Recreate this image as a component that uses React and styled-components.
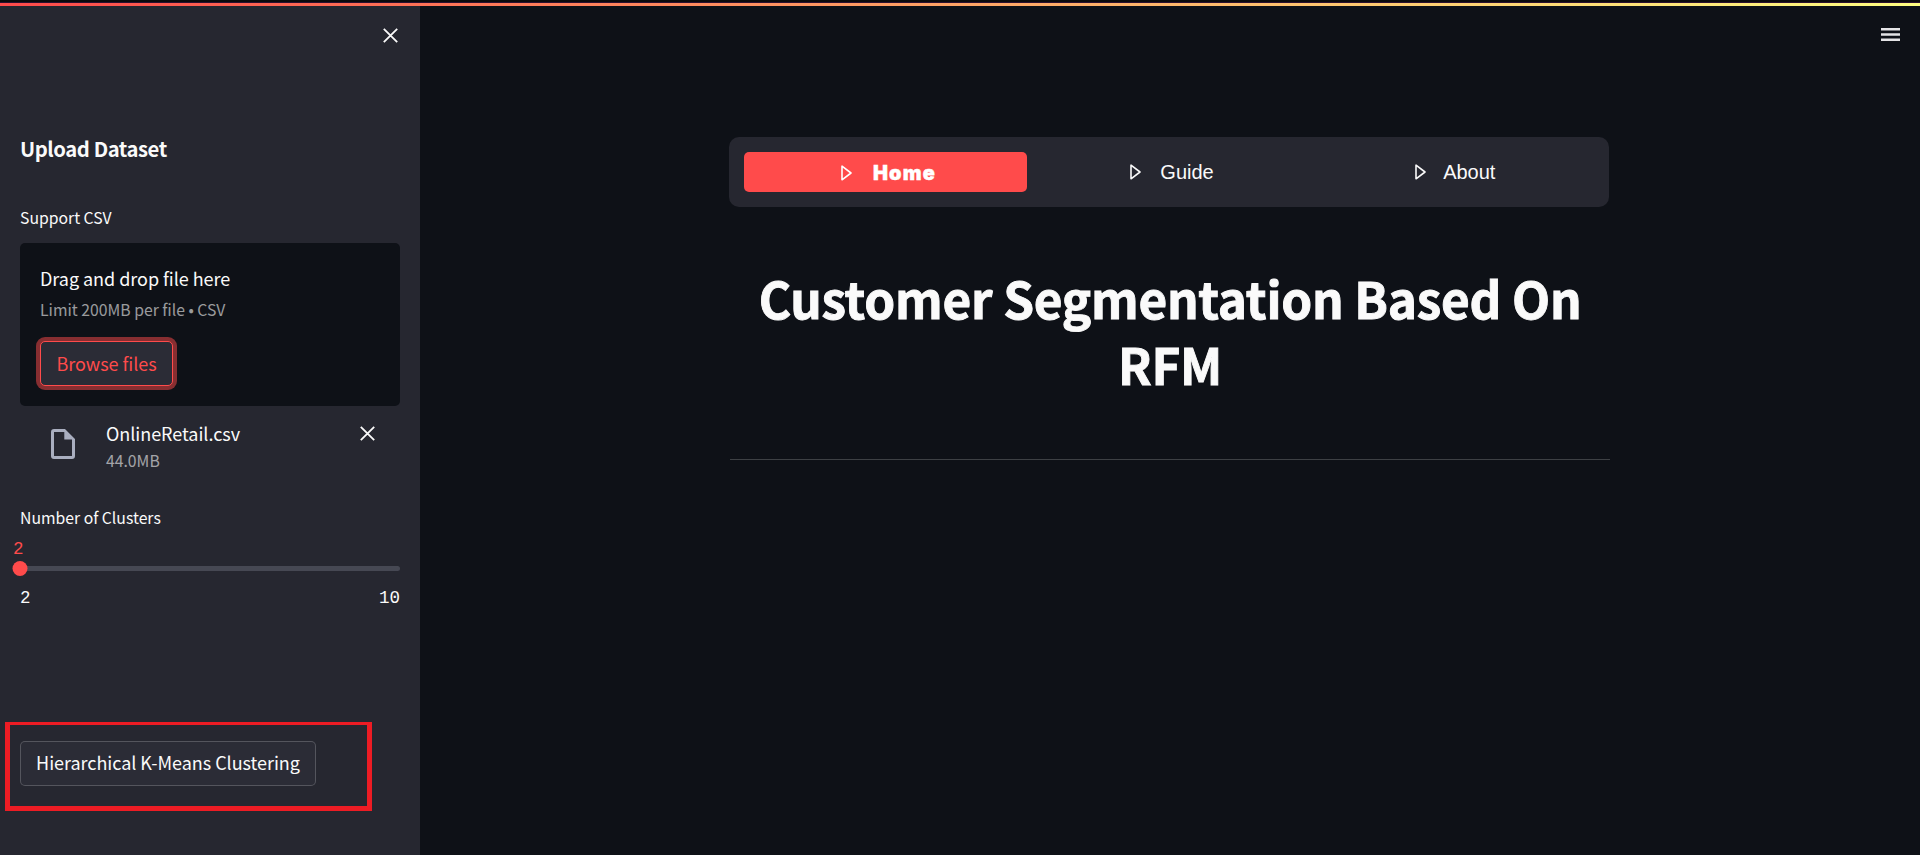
import React from "react";
import styled, { createGlobalStyle } from "styled-components";

const sans = `"Noto Sans CJK JP", "Noto Sans CJK SC", "Noto Sans", sans-serif`;
const mono = `"Liberation Mono", "DejaVu Sans Mono", monospace`;

const GlobalStyle = createGlobalStyle`
  * { box-sizing: border-box; }
  body {
    margin: 0;
    background: #0e1117;
    color: #fafafa;
    font-family: ${sans};
  }
  button { font: inherit; cursor: pointer; }
`;

const Page = styled.div`
  height: 855px;
  display: flex;
  flex-direction: column;
  overflow: hidden;
`;

const Decoration = styled.div`
  flex: none;
  height: 6px;
  border-top: 2px solid #0b0a0c;
  background: linear-gradient(90deg, #ff4b4b, #fffd80);
  box-shadow: inset 0 1px 0 #2a1030;
`;

const Columns = styled.div`
  flex: 1;
  display: flex;
`;

const Sidebar = styled.aside`
  width: 420px;
  flex: none;
  display: flex;
  flex-direction: column;
  background: #262730;
`;

const SidebarHeader = styled.div`
  display: flex;
  justify-content: flex-end;
  padding: 22px 22px 0 0;
  height: 128px;
`;

const IconButton = styled.button`
  display: flex;
  width: 15px;
  height: 15px;
  padding: 0;
  border: 0;
  background: none;
  color: #fafafa;
`;

const SidebarTitle = styled.h4`
  margin: 0 20px 42px;
  font-size: 20.25px;
  font-weight: 700;
  line-height: 30px;
  letter-spacing: -0.42px;
  white-space: nowrap;
`;

const Widget = styled.section`
  margin: 0 20px;
`;

const Label = styled.div`
  height: 24px;
  font-size: 15.75px;
  line-height: 24px;
  white-space: nowrap;
`;

const Text = styled.div`
  font-size: 18px;
  line-height: 30px;
  white-space: nowrap;
  letter-spacing: -0.04px;
`;

const Caption = styled(Label)`
  color: rgba(250, 250, 250, 0.6);
`;

const DropZone = styled.div`
  margin-top: 13px;
  height: 163px;
  padding: 20px;
  border-radius: 5px;
  background: #0e1117;
`;

const DropCaption = styled(Caption)`
  margin: 5px 0 19px;
`;

const Button = styled.button`
  display: flex;
  align-items: center;
  justify-content: center;
  width: ${(p) => p.$width}px;
  height: 45px;
  padding: 0 0 ${(p) => (p.$focused ? 2 : 3)}px;
  border: 1px solid ${(p) => (p.$focused ? "#ff4b4b" : "rgba(250, 250, 250, 0.2)")};
  border-radius: 5px;
  background: #2b2c36;
  color: ${(p) => (p.$focused ? "#ff4b4b" : "#fafafa")};
  box-shadow: ${(p) => (p.$focused ? "0 0 0 4px rgba(255, 75, 75, 0.5)" : "none")};
`;

const FileRow = styled.div`
  display: flex;
  height: 100px;
  padding: 12px 25px 0 31px;
`;

const FileIcon = styled.svg`
  width: 24px;
  height: 30px;
  margin: 11px 31px 0 0;
`;

const FileInfo = styled.div`
  flex: 1;
`;

const FileSize = styled(Caption)`
  margin-top: 1px;
`;

const RemoveSlot = styled.div`
  padding-top: 8px;
`;

const SliderValue = styled.div`
  margin: 7px 0 0 -7px;
  height: 24px;
  font-family: ${mono};
  font-size: 17.5px;
  line-height: 24px;
  color: #ff4b4b;
`;

const Track = styled.div`
  display: flex;
  align-items: center;
  height: 5px;
  margin-top: 5px;
  border-radius: 5px;
  background: #464853;
`;

const Thumb = styled.div`
  flex: none;
  width: 15px;
  height: 15px;
  margin-left: -8px;
  transform: translateX(0.5px);
  border-radius: 50%;
  background: #ff4b4b;
`;

const SliderRange = styled.div`
  display: flex;
  justify-content: space-between;
  margin-top: 15px;
  font-family: ${mono};
  font-size: 17.5px;
  line-height: 24px;
`;

const Highlight = styled.div`
  width: 367px;
  height: 89px;
  margin: 112px 0 0 5px;
  padding: 16px 0 0 10px;
  border: solid #ed1c24;
  border-width: 3px 5px 5px;
`;

const Main = styled.main`
  flex: 1;
  display: flex;
  flex-direction: column;
`;

const Toolbar = styled.div`
  display: flex;
  justify-content: flex-end;
  height: 131px;
  padding: 22px 20px 0 0;
`;

const MenuIcon = styled.svg`
  width: 19px;
  height: 13px;
`;

const Content = styled.div`
  width: 880px;
  margin-left: 309px;
`;

const Nav = styled.nav`
  display: grid;
  grid-template-columns: repeat(3, minmax(0, 1fr));
  height: 70px;
  padding: 15px;
  border-radius: 10px;
  background: #262730;
`;

const NavItem = styled.a`
  display: flex;
  gap: ${(p) => p.$gap}px;
  height: 40px;
  padding-left: ${(p) => p.$inset}px;
  border-radius: 5px;
  background: ${(p) => (p.$active ? "#ff4b4b" : "transparent")};
  color: ${(p) => (p.$active ? "#fff" : "#fafafa")};
  font-family: ${(p) => (p.$active ? `Inter, sans-serif` : `"Liberation Sans", Arial, sans-serif`)};
  font-weight: ${(p) => (p.$active ? 900 : 400)};
  font-size: 20px;
  letter-spacing: ${(p) => (p.$active ? 1.1 : 0)}px;
  -webkit-text-stroke: ${(p) => (p.$active ? 0.4 : 0)}px currentColor;
  line-height: ${(p) => (p.$active ? 42 : 40)}px;
`;

const PlayIcon = styled.svg`
  flex: none;
  width: 11px;
  height: 16px;
  margin-top: ${(p) => (p.$low ? 13 : 12)}px;
`;

const Title = styled.h1`
  margin: 58px -1px 0 1px;
  font-size: 49.5px;
  font-weight: 700;
  line-height: 66px;
  text-align: center;
  letter-spacing: -0.27px;
  -webkit-text-stroke: 0.9px currentColor;
`;

const Divider = styled.hr`
  height: 1px;
  margin: 62px -1px 0 1px;
  border: 0;
  background: #3d4044;
`;

const Cross = () => (
  <svg width="15" height="15" viewBox="0 0 15 15" fill="none" stroke="currentColor" strokeWidth="1.8">
    <path d="M0.8 0.8 14.2 14.2M14.2 0.8 0.8 14.2" />
  </svg>
);

const Play = ({ low }) => (
  <PlayIcon $low={low} viewBox="0 0 11 16" fill="none" stroke="currentColor" strokeWidth="1.6" strokeLinejoin="round">
    <path d="M1 1.2V14.8L10 8Z" />
  </PlayIcon>
);

const navItems = [
  { label: "Home", inset: 97, gap: 21, active: true },
  { label: "Guide", inset: 103, gap: 19 },
  { label: "About", inset: 104, gap: 17.5 },
];

export default function App() {
  return (
    <Page>
      <GlobalStyle />
      <Decoration />
      <Columns>
        <Sidebar>
          <SidebarHeader>
            <IconButton aria-label="Close sidebar"><Cross /></IconButton>
          </SidebarHeader>
          <SidebarTitle>Upload Dataset</SidebarTitle>
          <Widget>
            <Label>Support CSV</Label>
            <DropZone>
              <Text>Drag and drop file here</Text>
              <DropCaption>Limit 200MB per file • CSV</DropCaption>
              <Button $width={133} $focused><Text>Browse files</Text></Button>
            </DropZone>
            <FileRow>
              <FileIcon viewBox="0 0 24 30">
                <path
                  fill="#a9aebf"
                  fillRule="evenodd"
                  d="M3 0H14L24 10V27A3 3 0 0 1 21 30H3A3 3 0 0 1 0 27V3A3 3 0 0 1 3 0ZM3 3V27H21V10.5H13.3V3Z"
                />
              </FileIcon>
              <FileInfo>
                <Text>OnlineRetail.csv</Text>
                <FileSize>44.0MB</FileSize>
              </FileInfo>
              <RemoveSlot>
                <IconButton aria-label="Remove file"><Cross /></IconButton>
              </RemoveSlot>
            </FileRow>
          </Widget>
          <Widget>
            <Label>Number of Clusters</Label>
            <SliderValue>2</SliderValue>
            <Track><Thumb /></Track>
            <SliderRange><span>2</span><span>10</span></SliderRange>
          </Widget>
          <Highlight>
            <Button $width={296}><Text>Hierarchical K-Means Clustering</Text></Button>
          </Highlight>
        </Sidebar>
        <Main>
          <Toolbar>
            <MenuIcon viewBox="0 0 19 13" fill="#e4e4e6">
              <path d="M0 0H19V2.6H0ZM0 5.2H19V7.8H0ZM0 10.4H19V13H0Z" />
            </MenuIcon>
          </Toolbar>
          <Content>
            <Nav>
              {navItems.map((item) => (
                <NavItem key={item.label} $active={item.active} $inset={item.inset} $gap={item.gap}>
                  <Play low={item.active} />
                  {item.label}
                </NavItem>
              ))}
            </Nav>
            <Title>Customer Segmentation Based On RFM</Title>
            <Divider />
          </Content>
        </Main>
      </Columns>
    </Page>
  );
}
